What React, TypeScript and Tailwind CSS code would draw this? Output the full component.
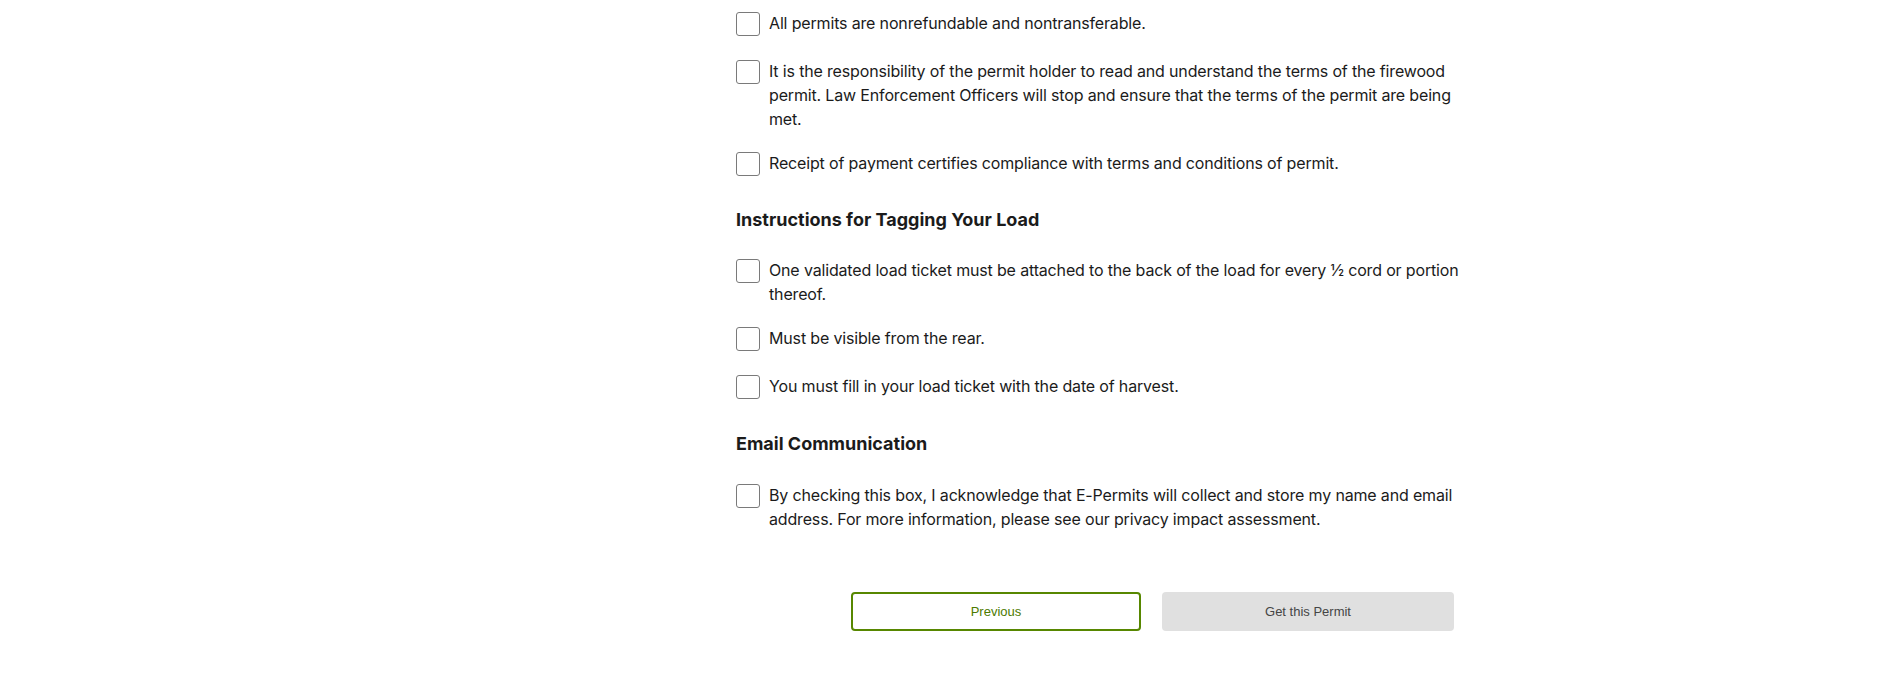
import React, { useState } from 'react';

const permitTerms = [
  'All permits are nonrefundable and nontransferable.',
  'It is the responsibility of the permit holder to read and understand the terms of the firewood permit. Law Enforcement Officers will stop and ensure that the terms of the permit are being met.',
  'Receipt of payment certifies compliance with terms and conditions of permit.',
];

const taggingTerms = [
  'One validated load ticket must be attached to the back of the load for every \u00BD cord or portion thereof.',
  'Must be visible from the rear.',
  'You must fill in your load ticket with the date of harvest.',
];

const emailTerms = [
  'By checking this box, I acknowledge that E-Permits will collect and store my name and email address. For more information, please see our privacy impact assessment.',
];

const CheckItem: React.FC<{ text: string; checked: boolean; onToggle: () => void }> = ({ text, checked, onToggle }) => (
  <label className="flex items-start gap-[9px] cursor-pointer">
    <span className="shrink-0 py-[2px]">
      <input type="checkbox" checked={checked} onChange={onToggle} className="sr-only" />
      <span className="block w-6 h-6 rounded-[3px] border border-[#7a7a7a] bg-white" />
    </span>
    <span className="pt-px -mb-px text-base leading-6 tracking-[-0.16px] text-[#1b1b1b]">{text}</span>
  </label>
);

const CheckList: React.FC<{ items: string[]; prefix: string; state: Record<string, boolean>; toggle: (k: string) => void }> = ({ items, prefix, state, toggle }) => (
  <div className="flex flex-col gap-5">
    {items.map((t, i) => (
      <CheckItem key={i} text={t} checked={!!state[prefix + i]} onToggle={() => toggle(prefix + i)} />
    ))}
  </div>
);

export default function App() {
  const [checks, setChecks] = useState<Record<string, boolean>>({});
  const toggle = (k: string) => setChecks(prev => ({ ...prev, [k]: !prev[k] }));

  return (
    <div className="min-h-screen bg-white font-['Inter',sans-serif]">
      <div className="ml-[736px] w-[730px] pt-[10px] pb-[62px]">
        <CheckList items={permitTerms} prefix="p" state={checks} toggle={toggle} />

        {/* Tagging */}
        <h2 className="mt-[30px] mb-[25px] text-lg leading-6 font-bold text-[#1b1b1b]">Instructions for Tagging Your Load</h2>
        <CheckList items={taggingTerms} prefix="t" state={checks} toggle={toggle} />

        {/* Email */}
        <h2 className="mt-[31px] mb-[26px] text-lg leading-6 font-bold text-[#1b1b1b]">Email Communication</h2>
        <CheckList items={emailTerms} prefix="e" state={checks} toggle={toggle} />

        <div className="mt-[62px] w-[718px] flex justify-end gap-[21px] font-['Liberation_Sans',Arial,sans-serif]">
          <button className="w-[290px] h-[39px] rounded-[4px] border-2 border-[#578700] bg-white text-[13px] text-[#4d7a00]">
            Previous
          </button>
          <button disabled className="w-[292px] h-[39px] rounded-[4px] bg-[#e0e0e0] text-[13px] text-[#454545]">
            Get this Permit
          </button>
        </div>
      </div>
    </div>
  );
}
